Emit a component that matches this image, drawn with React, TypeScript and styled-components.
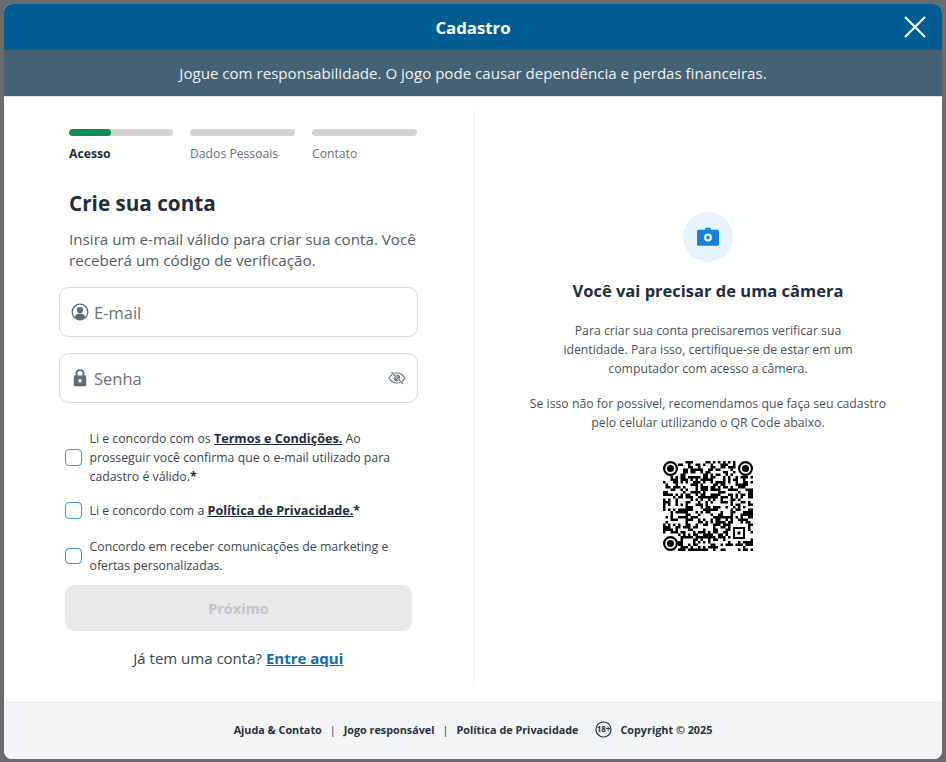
import React from "react";
import styled, { createGlobalStyle } from "styled-components";

const Global = createGlobalStyle`
  html, body { margin: 0; padding: 0; height: 100%; background: #6a6b6e; }
  body { font-family: "Open Sans", "Noto Sans", sans-serif; color: #1f2d3d; }
  * { box-sizing: border-box; }
`;

const Page = styled.div`
  width: 946px;
  height: 762px;
  padding: 4px 4px 3px;
  overflow: hidden;
`;
const Modal = styled.div`
  height: 755px;
  border-radius: 8px;
  background: #fff;
  overflow: hidden;
  display: flex;
  flex-direction: column;
`;
const Header = styled.header`
  position: relative;
  height: 46px;
  flex: none;
  background: #025e92;
  color: #fff;
  display: flex;
  align-items: center;
  justify-content: center;
  font-size: 16.8px;
  font-weight: 700;
`;
const CloseButton = styled.button`
  position: absolute;
  right: 16px;
  top: 12px;
  width: 22px;
  height: 22px;
  padding: 0;
  border: 0;
  background: none;
  display: flex;
`;
const Warning = styled.div`
  height: 47px;
  flex: none;
  background: #456275;
  color: #eef1f3;
  border-bottom: 1px solid #dfe4e7;
  display: flex;
  align-items: center;
  justify-content: center;
  font-size: 15.1px;
`;
const Body = styled.main`
  flex: 1;
  display: flex;
  padding: 14px 0 15px;
  min-height: 0;
`;
const LeftColumn = styled.section`
  width: 471px;
  flex: none;
  padding: 18px 56.5px 0 55px;
  border-right: 1px solid #f0f1f2;
`;
const Stepper = styled.div`
  margin-left: 10px;
  display: grid;
  grid-template-columns: 104px 105px 105px;
  column-gap: 17px;
`;
const Step = styled.div`
  display: flex;
  flex-direction: column;
  gap: 9px;
`;
const Track = styled.div`
  height: 7px;
  border-radius: 4px;
  background: #d1d4d7;
  overflow: hidden;
`;
const Fill = styled.div`
  height: 100%;
  border-radius: 4px;
  background: #0f8a50;
`;
const StepLabel = styled.span<{ $active?: boolean }>`
  font-size: 12.2px;
  line-height: 18px;
  font-weight: ${(p) => (p.$active ? 700 : 400)};
  color: ${(p) => (p.$active ? "#1f2d3d" : "#68727d")};
`;
const Title = styled.h1`
  margin: 25px 0 0 10px;
  font-size: 20.7px;
  line-height: 30px;
  font-weight: 700;
  color: #1f2d3d;
`;
const Intro = styled.p`
  margin: 11px 0 0 10px;
  font-size: 15.2px;
  line-height: 21px;
  color: #515d69;
`;
const Field = styled.div<{ $top: number }>`
  margin-top: ${(p) => p.$top}px;
  height: 50px;
  border: 1.5px solid #d6d9dc;
  border-radius: 10px;
  display: flex;
  align-items: center;
  padding: 0 11px;
  gap: 5px;
  font-size: 16.5px;
  color: #68727d;
`;
const FieldText = styled.span`
  flex: 1;
`;
const Checks = styled.div`
  margin: 26px 0 0 6px;
  display: flex;
  flex-direction: column;
`;
const CheckRow = styled.label<{ $top?: number }>`
  display: flex;
  align-items: center;
  gap: 8px;
  margin-top: ${(p) => p.$top ?? 0}px;
  font-size: 12.3px;
  line-height: 19px;
  color: #3a4550;
`;
const Box = styled.span`
  flex: none;
  width: 16.5px;
  height: 16.5px;
  border: 1.5px solid #3f93d6;
  border-radius: 4px;
  background: #fff;
`;
const Strong = styled.a`
  color: #1f2d3d;
  font-size: 12.6px;
  font-weight: 700;
  text-decoration: underline;
`;
const Star = styled.b`
  color: #1f2d3d;
`;
const Submit = styled.button`
  display: block;
  margin: 10px 5px 0 6px;
  width: 347px;
  height: 46px;
  border: 0;
  border-radius: 9px;
  background: #e8e9eb;
  color: #c3c5c8;
  font-family: inherit;
  font-size: 14.5px;
  font-weight: 700;
`;
const LoginLine = styled.p`
  margin: 16px 0 0;
  text-align: center;
  font-size: 15px;
  line-height: 22px;
  color: #3a4550;
`;
const LoginLink = styled.a`
  color: #0c6cb0;
  font-weight: 700;
  text-decoration: underline;
`;
const RightColumn = styled.section`
  flex: 1;
  padding: 101px 1px 0 0;
  display: flex;
  flex-direction: column;
  align-items: center;
`;
const CameraBadge = styled.div`
  width: 50px;
  height: 50px;
  border-radius: 50%;
  background: #e6f2fc;
  display: flex;
  align-items: center;
  justify-content: center;
`;
const RightTitle = styled.h2`
  margin: 16px 0 0;
  font-size: 16.5px;
  line-height: 26px;
  font-weight: 700;
  color: #1f2d3d;
`;
const RightText = styled.p<{ $top: number; $width: number }>`
  margin: ${(p) => p.$top}px 0 0;
  width: ${(p) => p.$width}px;
  text-align: center;
  font-size: 12.25px;
  line-height: 19px;
  color: #48535e;
`;
const QrWrap = styled.div`
  margin-top: 29px;
  width: 90px;
  height: 90px;
`;
const Footer = styled.footer`
  height: 58px;
  flex: none;
  padding-bottom: 1px;
  background: #f3f4f5;
  display: flex;
  align-items: center;
  justify-content: center;
  font-size: 10.8px;
  font-weight: 700;
  color: #27323e;
`;
const Sep = styled.span`
  margin: 0 8px;
  font-weight: 400;
`;
const AgeIcon = styled.span`
  display: flex;
  margin: 0 8px 0 17px;
`;

const UserIcon = () => (
  <svg width="18" height="18" viewBox="0 0 18 18" style={{ flex: "none" }}>
    <circle cx="9" cy="9" r="7.8" fill="none" stroke="#5f6a75" strokeWidth="1.3" />
    <circle cx="9" cy="7" r="3.1" fill="#5f6a75" />
    <path d="M3.8 14.2c.8-2.6 2.7-3.6 5.2-3.6s4.4 1 5.2 3.6c-1.4 1.4-3.2 2.1-5.2 2.1s-3.8-.7-5.2-2.1z" fill="#5f6a75" />
  </svg>
);
const LockIcon = () => (
  <svg width="18" height="20" viewBox="0 0 18 20" style={{ flex: "none" }}>
    <path d="M5.5 8V5.6C5.5 3.6 7 2.2 9 2.2s3.5 1.4 3.5 3.4V8" fill="none" stroke="#5f6a75" strokeWidth="1.8" />
    <path fillRule="evenodd" d="M4.2 7.5h9.6c.8 0 1.4.6 1.4 1.4v8c0 .8-.6 1.4-1.4 1.4H4.2c-.8 0-1.4-.6-1.4-1.4v-8c0-.8.6-1.4 1.4-1.4zM9 11a1.8 1.8 0 1 0 0 3.6A1.8 1.8 0 0 0 9 11z" fill="#5f6a75" />
  </svg>
);
const EyeOffIcon = () => (
  <svg width="18" height="14" viewBox="0 0 18 14" style={{ flex: "none" }}>
    <path d="M1 7c1.9-3.2 4.8-5 8-5s6.1 1.8 8 5c-1.9 3.2-4.8 5-8 5s-6.1-1.800-8-5z" fill="none" stroke="#6b7680" strokeWidth="1.2" />
    <circle cx="9" cy="7" r="3.2" fill="#6b7680" />
    <path d="M4 1.5 14.5 12.5" stroke="#fff" strokeWidth="2.4" />
    <path d="M3.5 1 15 13" stroke="#6b7680" strokeWidth="1.1" />
  </svg>
);
const CameraIcon = () => (
  <svg width="24" height="20" viewBox="0 0 24 20">
    <path d="M9 1.8c0-.6.4-1 1-1h4c.6 0 1 .4 1 1v1H9z" fill="#1480dc" />
    <path fillRule="evenodd" d="M2.6 2.8h18.8c.9 0 1.6.7 1.6 1.6v12.800c0 .9-.7 1.600-1.600 1.600H2.600c-.9 0-1.600-.7-1.600-1.600V4.400c0-.9.7-1.600 1.600-1.600zM12 6.600a4 4 0 1 0 0 8 4 4 0 0 0 0-8zm0 2.200a1.800 1.800 0 1 1 0 3.600 1.800 1.800 0 0 1 0-3.600z" fill="#1480dc" />
  </svg>
);
const AgeBadge = () => (
  <svg width="17" height="17" viewBox="0 0 17 17">
    <circle cx="8.5" cy="8.5" r="7.5" fill="none" stroke="#27323e" strokeWidth="1.2" />
    <text x="8.5" y="11.3" textAnchor="middle" fontSize="8" fontWeight="700" fill="#27323e" fontFamily="Open Sans, sans-serif">18+</text>
  </svg>
);

const N = 36;
const CELL = 2.5;
const clear = (px: number, py: number) =>
  (px < 16 && py < 16) || (px > 73 && py < 16) || (px < 16 && py > 73) || (px > 66 && px < 85 && py > 62 && py < 80);
const qrPath = (() => {
  let s = 20250;
  let d = "";
  for (let y = 0; y < N; y++) {
    for (let x = 0; x < N; x++) {
      s = (s * 1103515245 + 12345) & 0x7fffffff;
      const on = ((s >> 16) & 7) < 4;
      if (on && !clear(x * CELL + 1, y * CELL + 1)) d += `M${x * CELL} ${y * CELL}h${CELL}v${CELL}h-${CELL}z`;
    }
  }
  return d;
})();
const Eye = ({ x, y }: { x: number; y: number }) => (
  <g>
    <circle cx={x + 7.5} cy={y + 7.5} r={6.4} fill="none" stroke="#000" strokeWidth="2.2" />
    <circle cx={x + 7.5} cy={y + 7.5} r={3.5} fill="#000" />
  </g>
);
const Qr = () => (
  <svg width="90" height="90" viewBox="0 0 90 90">
    <path d={qrPath} fill="#000" />
    <Eye x={0} y={0} />
    <Eye x={75} y={0} />
    <Eye x={0} y={75} />
    <rect x="71" y="67" width="10" height="10" fill="none" stroke="#000" strokeWidth="2" />
    <rect x="74.5" y="70.5" width="3" height="3" fill="#000" />
  </svg>
);

export default function App() {
  return (
    <Page>
      <Global />
      <Modal>
        <Header>
          Cadastro
          <CloseButton aria-label="Fechar">
            <svg width="22" height="22" viewBox="0 0 22 22">
              <path d="M1 1 21 21M21 1 1 21" stroke="#fff" strokeWidth="2" />
            </svg>
          </CloseButton>
        </Header>
        <Warning>Jogue com responsabilidade. O jogo pode causar dependência e perdas financeiras.</Warning>
        <Body>
          <LeftColumn>
            <Stepper>
              <Step>
                <Track><Fill style={{ width: "40%" }} /></Track>
                <StepLabel $active>Acesso</StepLabel>
              </Step>
              <Step>
                <Track />
                <StepLabel>Dados Pessoais</StepLabel>
              </Step>
              <Step>
                <Track />
                <StepLabel>Contato</StepLabel>
              </Step>
            </Stepper>
            <Title>Crie sua conta</Title>
            <Intro>Insira um e-mail válido para criar sua conta. Você receberá um código de verificação.</Intro>
            <Field $top={16}>
              <UserIcon />
              <FieldText>E-mail</FieldText>
            </Field>
            <Field $top={16}>
              <LockIcon />
              <FieldText>Senha</FieldText>
              <EyeOffIcon />
            </Field>
            <Checks>
              <CheckRow>
                <Box />
                <span>
                  Li e concordo com os <Strong>Termos e Condições.</Strong> Ao prosseguir você confirma que o e-mail utilizado para cadastro é válido.<Star>*</Star>
                </span>
              </CheckRow>
              <CheckRow $top={15}>
                <Box />
                <span>
                  Li e concordo com a <Strong>Política de Privacidade.</Strong><Star>*</Star>
                </span>
              </CheckRow>
              <CheckRow $top={17}>
                <Box />
                <span>Concordo em receber comunicações de marketing e ofertas personalizadas.</span>
              </CheckRow>
            </Checks>
            <Submit disabled>Próximo</Submit>
            <LoginLine>
              Já tem uma conta? <LoginLink>Entre aqui</LoginLink>
            </LoginLine>
          </LeftColumn>
          <RightColumn>
            <CameraBadge><CameraIcon /></CameraBadge>
            <RightTitle>Você vai precisar de uma câmera</RightTitle>
            <RightText $top={17} $width={310}>
              Para criar sua conta precisaremos verificar sua identidade. Para isso, certifique-se de estar em um computador com acesso a câmera.
            </RightText>
            <RightText $top={16} $width={370}>
              Se isso não for possivel, recomendamos que faça seu cadastro pelo celular utilizando o QR Code abaixo.
            </RightText>
            <QrWrap><Qr /></QrWrap>
          </RightColumn>
        </Body>
        <Footer>
          Ajuda &amp; Contato
          <Sep>|</Sep>
          Jogo responsável
          <Sep>|</Sep>
          Política de Privacidade
          <AgeIcon><AgeBadge /></AgeIcon>
          Copyright © 2025
        </Footer>
      </Modal>
    </Page>
  );
}
